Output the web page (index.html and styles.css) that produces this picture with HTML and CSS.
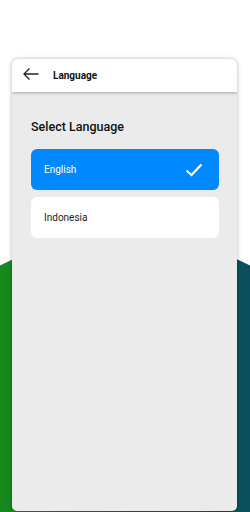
FILE: index.html
```html
<!DOCTYPE html>
<html lang="en">
<head>
    <meta charset="UTF-8">
    <meta name="viewport" content="width=device-width, initial-scale=1.0">
    <title>Language</title>
    <link rel="stylesheet" href="styles.css">
</head>
<body>

<div id="screen">
    <div class="backdrop"></div>

    <div id="page">
        <div class="card">
            <div class="header">
                <button class="back" type="button">
                    <svg width="16" height="12" viewBox="0 0 16 12">
                        <path d="M15.5 6H1M6.5 0.5L1 6l5.5 5.5" fill="none" stroke="#222" stroke-width="1.3"/>
                    </svg>
                </button>
                <span class="title">Language</span>
            </div>

            <div class="content">
                <h2>Select Language</h2>

                <div class="option selected">
                    <span>English</span>
                    <svg width="18" height="14" viewBox="0 0 18 14">
                        <path d="M1.5 7.5l5 4.5L16.5 1.5" fill="none" stroke="#fff" stroke-width="2.2"/>
                    </svg>
                </div>
                <div class="option">
                    <span>Indonesia</span>
                </div>
            </div>
        </div>
    </div>
</div>

</body>
</html>
```

FILE: styles.css
```css
body {
    font-family: Roboto, "Noto Sans", sans-serif;
    background-color: #fff;
    margin: 0;
    padding: 0;
}

#screen {
    position: relative;
    height: 512px;
    overflow: hidden;
}

.backdrop {
    position: absolute;
    left: -155px;
    top: 236px;
    width: 560px;
    height: 560px;
    border-radius: 50%;
    background: linear-gradient(90deg, #168a1c 0%, #168a1c 28%, #0f6a3e 50%, #0b4f5e 72%, #0a4862 100%);
    z-index: 0;
}

#page {
    position: relative;
    z-index: 1;
    padding-top: 59px;
}

.card {
    margin: 0 13px 0 12px;
    height: 452px;
    background-color: #ebebeb;
    border-radius: 6px 6px 5px 5px;
    box-shadow: 0 0 4px rgba(0, 0, 0, 0.3);
    overflow: hidden;
}

.header {
    display: flex;
    align-items: center;
    height: 33px;
    padding-left: 11px;
    background-color: #fff;
    box-shadow: 0 1px 3px rgba(0, 0, 0, 0.3);
    position: relative;
}

.back {
    border: none;
    background: none;
    padding: 0;
    display: flex;
    margin-top: -4px;
}

.title {
    margin-left: 14px;
    font-size: 10px;
    font-weight: bold;
    color: #111;
}

.content {
    padding: 27px 18px 0 19px;
}

h2 {
    margin: 0 0 15px;
    font-size: 12.5px;
    font-weight: 500;
    color: #111;
}

.option {
    display: flex;
    align-items: center;
    justify-content: space-between;
    height: 41px;
    padding: 0 16px 0 13px;
    margin-bottom: 7px;
    background-color: #fff;
    border-radius: 6px;
    font-size: 10px;
    color: #222;
}

.option.selected {
    background-color: #0088ff;
    color: #fff;
}
```
